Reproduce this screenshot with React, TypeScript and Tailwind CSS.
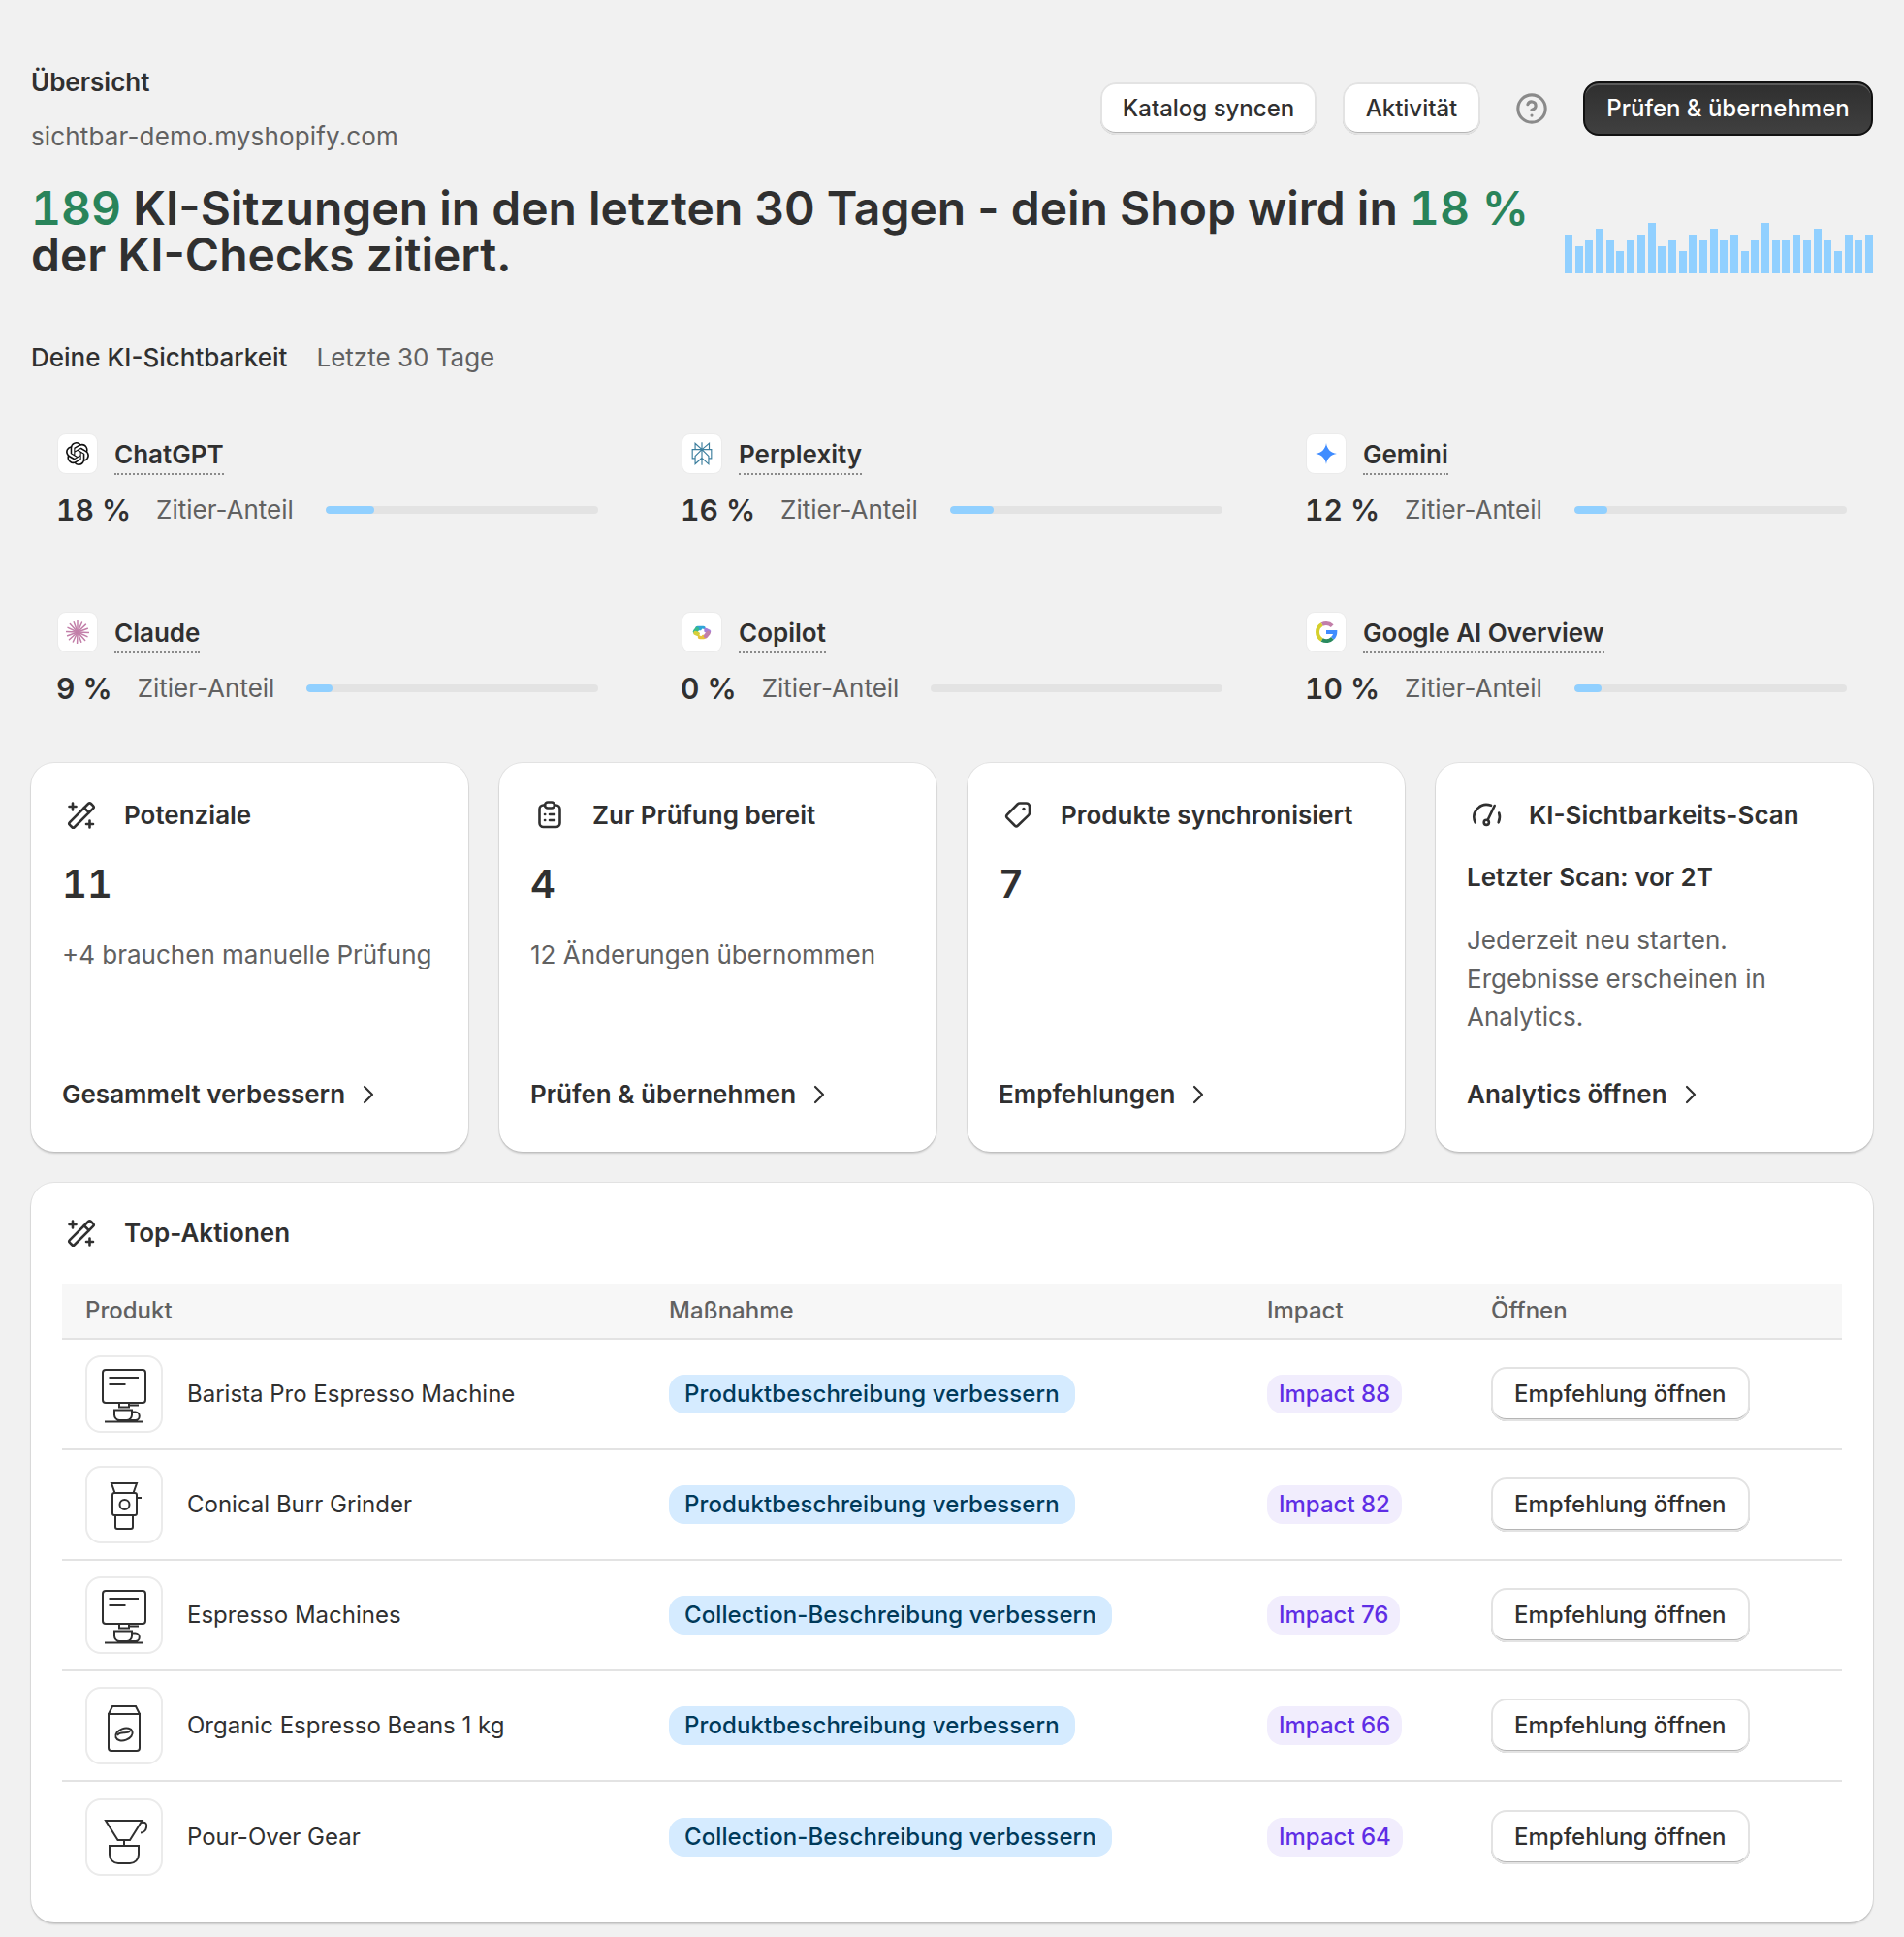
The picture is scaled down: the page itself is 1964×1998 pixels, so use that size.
import { ChevronRight, CircleHelp } from 'lucide-react';
import { SiOpenai, SiPerplexity } from 'react-icons/si';
import type { ReactNode } from 'react';

const sparkBars = [40, 28, 34, 46, 34, 23, 34, 40, 52, 28, 34, 23, 40, 34, 46, 34, 40, 23, 34, 52, 34, 34, 40, 34, 46, 34, 23, 40, 34, 40];

function WandIcon() {
  return (
    <svg viewBox="0 0 40 40" className="h-10 w-10 shrink-0" fill="none" stroke="#303030" strokeWidth="2.6" strokeLinecap="round">
      <g transform="rotate(-45 20 20)">
        <rect x="4.500" y="16.500" width="31" height="7" rx="2" />
        <path d="M27.500 16.500v7" />
      </g>
      <path d="M11 7.500v7M7.500 11h7M28.500 25.500v7M25 29h7" />
    </svg>
  );
}

function ClipboardIcon() {
  return (
    <svg viewBox="0 0 40 40" className="h-10 w-10 shrink-0" fill="none" stroke="#303030" strokeWidth="2.6" strokeLinecap="round">
      <path d="M15 9.500h-1.500a4 4 0 0 0-4 4V28a4 4 0 0 0 4 4h13a4 4 0 0 0 4-4V13.500a4 4 0 0 0-4-4H25" />
      <rect x="15" y="6.500" width="10" height="6" rx="3" />
      <path d="M15 19h.2M20 19h5M15 25h.2M20 25h5" />
    </svg>
  );
}

function TagIcon() {
  return (
    <svg viewBox="0 0 40 40" className="h-10 w-10 shrink-0" fill="none" stroke="#303030" strokeWidth="2.6" strokeLinejoin="round">
      <path d="M22 7.500h6.500a3.500 3.500 0 0 1 3.500 3.500v6.500a3.500 3.500 0 0 1-1 2.400L20 30.500a2.400 2.400 0 0 1-3.300 0l-7.800-7.800a2.400 2.400 0 0 1 0-3.300L19.600 8.500a3.400 3.400 0 0 1 2.400-1Z" />
      <circle cx="26" cy="13.500" r="1.700" fill="#303030" stroke="none" />
    </svg>
  );
}

function GaugeIcon() {
  return (
    <svg viewBox="0 0 40 40" className="h-10 w-10 shrink-0" fill="none" stroke="#303030" strokeWidth="2.6" strokeLinecap="round">
      <path d="M8.700 27.500A13 13 0 0 1 25 9.800" />
      <path d="M33.200 17.500A13 13 0 0 1 32.700 27.300" />
      <path d="M21.500 25l7.200-15" />
      <circle cx="20.300" cy="27.300" r="2.600" />
    </svg>
  );
}

function ClaudeIcon() {
  const rays = [0, 24, 47, 70, 92, 115, 138, 160, 182, 205, 228, 250, 272, 295, 318, 340];
  return (
    <svg viewBox="0 0 24 24" className="h-6 w-6" stroke="#c27fa9" strokeWidth="1.5" strokeLinecap="round">
      {rays.map((r, i) => (
        <line key={r} x1="12" y1="12" x2="12" y2={i % 2 ? 1 : 0.5} transform={`rotate(${r} 12 12)`} />
      ))}
    </svg>
  );
}

function GeminiIcon() {
  return (
    <svg viewBox="0 0 24 24" className="h-6 w-6">
      <path d="M12 1c.7 6 4.500 10 11 11-6.500 1-10.300 5-11 11-.7-6-4.500-10-11-11 6.500-1 10.300-5 11-11Z" fill="#3f8cff" />
    </svg>
  );
}

function CopilotIcon() {
  return (
    <svg viewBox="0 0 24 24" className="h-6 w-6" fill="none" strokeWidth="4.500" strokeLinecap="round">
      <path d="M7.500 8h6" stroke="#2fa5d8" />
      <path d="M5 11.500l2-2.500" stroke="#38b98e" />
      <path d="M5.500 13l2.500 1" stroke="#d6cf3a" />
      <path d="M10 17h4" stroke="#e8c23a" />
      <path d="M16 10l3 1.500" stroke="#a77fd6" />
      <path d="M18.500 13l-2.500 3" stroke="#c27fa9" />
      <path d="M13 10l-2 4.500" stroke="#fff" strokeWidth="3" />
    </svg>
  );
}

function GoogleIcon() {
  return (
    <svg viewBox="0 0 24 24" className="h-6 w-6" fill="none" strokeWidth="4">
      <path d="M18.200 5.600A9 9 0 0 0 12 3c-1.600 0-3 .4-4.300 1.100" stroke="#c27fa9" />
      <path d="M7.700 4.100A9 9 0 0 0 7.700 19.900" stroke="#d5cf2c" />
      <path d="M7.700 19.900A9 9 0 0 0 18.500 18.300" stroke="#2a8a5f" />
      <path d="M18.500 18.300c1.700-1.500 2.800-3.700 2.800-6.300H12" stroke="#3f8cff" />
    </svg>
  );
}

function MachineIcon() {
  return (
    <svg viewBox="0 0 80 80" className="h-20 w-20 shrink-0" fill="none" stroke="#303030" strokeWidth="2">
      <rect x="18" y="15" width="44" height="34" rx="3" />
      <path d="M24.500 23h30.500M24.500 30h17M35 49v4.500h10V49M45 51.500h10M30 56.500h18v5a5.500 5.500 0 0 1-5.500 5.500h-7a5.500 5.500 0 0 1-5.500-5.500ZM48 58.500h3.500a4 4 0 0 1 0 8.500H45M20 68.500h40" />
    </svg>
  );
}

function GrinderIcon() {
  return (
    <svg viewBox="0 0 80 80" className="h-20 w-20 shrink-0" fill="none" stroke="#303030" strokeWidth="2">
      <path d="M27 18h26l-3.500 10h-19ZM53 33h5" />
      <rect x="28" y="28" width="25" height="23" rx="2" />
      <circle cx="40.500" cy="40" r="5" />
      <path d="M31 51v12a2 2 0 0 0 2 2h14a2 2 0 0 0 2-2V51" />
    </svg>
  );
}

function BagIcon() {
  return (
    <svg viewBox="0 0 80 80" className="h-20 w-20 shrink-0" fill="none" stroke="#303030" strokeWidth="2">
      <path d="M24 28l4-8h24l4 8M24 28h32v35a3 3 0 0 1-3 3H27a3 3 0 0 1-3-3Z" />
      <ellipse cx="40" cy="49" rx="9" ry="6" transform="rotate(-20 40 49)" />
      <path d="M33 50c3-5 9-1 13-4" />
    </svg>
  );
}

function DripperIcon() {
  return (
    <svg viewBox="0 0 80 80" className="h-20 w-20 shrink-0" fill="none" stroke="#303030" strokeWidth="2">
      <path d="M21 23h37.500L46 43H33.500ZM40 43v6M58 25c4-1 6 1 5 5-.5 3-3 5.500-6 5.500M25 49h30v9a9 9 0 0 1-9 9H34a9 9 0 0 1-9-9Z" />
    </svg>
  );
}

function ProviderStat({ name, value, icon }: { name: string; value: number; icon: ReactNode }) {
  return (
    <div>
      <div className="flex items-start gap-[18px]">
        <div className="flex h-10 w-10 items-center justify-center rounded-lg bg-white shadow-[0_0_0_1px_#ebebeb]">{icon}</div>
        <span className="inline-block h-[42px] border-b-2 border-dotted border-[#8a8a8a] text-[26px] leading-[42px] font-semibold">{name}</span>
      </div>
      <div className="mt-[18px] -ml-0.5 flex items-center gap-[26px]">
        <span className="text-[30px] leading-9 font-semibold tabular-nums">{value} %</span>
        <span className="text-[26px] leading-9 text-[#616161]">Zitier-Anteil</span>
        <div className="ml-[7px] h-2 flex-1 overflow-hidden rounded-full bg-[#e3e3e3]">
          <div className="h-full rounded-full bg-[#91d0ff]" style={{ width: `${value}%` }} />
        </div>
      </div>
    </div>
  );
}

function StatCard({ icon, title, children, link }: { icon: ReactNode; title: string; children: ReactNode; link: string }) {
  return (
    <div className="flex h-[401px] flex-col rounded-3xl bg-white px-8 pt-[34px] pb-[42px] shadow-[0_0_0_1px_rgba(0,0,0,0.06),0_2px_2px_rgba(0,0,0,0.16)]">
      <div className="flex h-10 items-center gap-6">
        {icon}
        <h3 className="text-[26px] leading-[34px] font-semibold">{title}</h3>
      </div>
      {children}
      <a className="mt-auto flex items-center gap-2 text-[26px] leading-[34px] font-semibold">
        {link}
        <ChevronRight className="h-8 w-8" strokeWidth={1.6} />
      </a>
    </div>
  );
}

function Metric({ value, sub }: { value: string; sub: string }) {
  return (
    <>
      <div className="mt-[27px] text-[40px] leading-[48px] font-semibold tabular-nums">{value}</div>
      {sub && <p className="mt-[29px] text-[26px] leading-10 whitespace-nowrap text-[#616161]">{sub}</p>}
    </>
  );
}

function ActionRow({ name, icon, action, impact, last }: { name: string; icon: ReactNode; action: string; impact: number; last?: boolean }) {
  return (
    <div className={`grid h-[114px] grid-cols-[602px_617px_231px_386px] items-center ${last ? '' : 'border-b-2 border-[#e3e3e3]'}`}>
      <div className="flex items-center gap-[25px] pl-6">
        <div className="flex h-20 w-20 items-center justify-center rounded-2xl border-2 border-[#ebebeb]">{icon}</div>
        <span className="text-2xl">{name}</span>
      </div>
      <div className="pl-6">
        <span className="inline-block h-10 rounded-2xl bg-[#d5ebff] px-4 text-2xl leading-10 font-[550] tracking-[0.1px] text-[#003a5a]">{action}</span>
      </div>
      <div className="pl-6">
        <span className="inline-block h-10 rounded-2xl bg-[#f1edfd] px-3 text-2xl leading-10 font-[550] text-[#5f2ee5]">Impact {impact}</span>
      </div>
      <div className="pl-6">
        <button className="h-14 rounded-2xl bg-white px-6 text-2xl font-[550] shadow-[inset_0_0_0_2px_#e3e3e3,inset_0_-3px_0_#b5b5b5]">Empfehlung öffnen</button>
      </div>
    </div>
  );
}

export default function App() {
  return (
    <div className="min-h-[1998px] bg-[#f1f1f1] px-8 pt-[68px] text-[#303030] [font-family:Inter,sans-serif]">
      {/* Kopfzeile */}
      <header className="flex items-start justify-between">
        <div>
          <h1 className="text-[26px] leading-[34px] font-semibold">Übersicht</h1>
          <p className="mt-[22px] text-[26px] leading-[34px] tracking-[0.15px] text-[#616161]">sichtbar-demo.myshopify.com</p>
        </div>
        <div className="mt-4 flex items-center">
          <button className="h-[54px] w-[223px] rounded-2xl bg-white text-2xl font-[550] shadow-[inset_0_0_0_2px_#e3e3e3,inset_0_-3px_0_#b5b5b5]">Katalog syncen</button>
          <button className="ml-[27px] h-[54px] w-[142px] rounded-2xl bg-white text-2xl font-[550] shadow-[inset_0_0_0_2px_#e3e3e3,inset_0_-3px_0_#b5b5b5]">Aktivität</button>
          <CircleHelp className="mx-9 h-[34px] w-[34px] text-[#8a8a8a]" strokeWidth={2.2} />
          <button className="h-14 w-[299px] rounded-2xl border-2 border-[#111] bg-gradient-to-b from-[#2f2f2f] to-[#404040] text-2xl font-[550] text-white shadow-[inset_0_2px_0_#5a5a5a]">Prüfen &amp; übernehmen</button>
        </div>
      </header>

      {/* Headline + Sparkline */}
      <div className="mt-[33px] flex items-start justify-between">
        <h2 className="w-[1570px] text-[48px] leading-[48px] font-semibold">
          <span className="text-[#29845a] tabular-nums">189</span> KI-Sitzungen in den letzten 30 Tagen - dein Shop wird in <span className="text-[#29845a] tabular-nums">18 %</span> der KI-Checks zitiert.
        </h2>
        <div className="mt-[39px] flex h-[52px] w-[318px] items-end justify-between">
          {sparkBars.map((h, i) => (
            <div key={i} className="w-2 bg-[#91d0ff]" style={{ height: h }} />
          ))}
        </div>
      </div>

      {/* KI-Sichtbarkeit */}
      <div className="mt-[65px] flex gap-[30px] text-[26px] leading-[34px]">
        <span className="font-medium">Deine KI-Sichtbarkeit</span>
        <span className="text-[#616161]">Letzte 30 Tage</span>
      </div>
      <div className="mt-[62px] grid grid-cols-3 gap-x-[87px] gap-y-[88px] pr-[27px] pl-7">
        <ProviderStat name="ChatGPT" value={18} icon={<SiOpenai className="h-6 w-6 text-[#111]" />} />
        <ProviderStat name="Perplexity" value={16} icon={<SiPerplexity className="h-6 w-6 text-[#3d7f9e]" />} />
        <ProviderStat name="Gemini" value={12} icon={<GeminiIcon />} />
        <ProviderStat name="Claude" value={9} icon={<ClaudeIcon />} />
        <ProviderStat name="Copilot" value={0} icon={<CopilotIcon />} />
        <ProviderStat name="Google AI Overview" value={10} icon={<GoogleIcon />} />
      </div>

      {/* Karten */}
      <div className="mt-[59px] grid grid-cols-4 gap-8">
        <StatCard icon={<WandIcon />} title="Potenziale" link="Gesammelt verbessern">
          <Metric value="11" sub="+4 brauchen manuelle Prüfung" />
        </StatCard>
        <StatCard icon={<ClipboardIcon />} title="Zur Prüfung bereit" link="Prüfen & übernehmen">
          <Metric value="4" sub="12 Änderungen übernommen" />
        </StatCard>
        <StatCard icon={<TagIcon />} title="Produkte synchronisiert" link="Empfehlungen">
          <Metric value="7" sub="" />
        </StatCard>
        <StatCard icon={<GaugeIcon />} title="KI-Sichtbarkeits-Scan" link="Analytics öffnen">
          <p className="mt-[27px] text-[26px] leading-[34px] font-semibold">Letzter Scan: vor 2T</p>
          <p className="mt-7 text-[26px] leading-[39.5px] text-[#616161]">Jederzeit neu starten. Ergebnisse erscheinen in Analytics.</p>
        </StatCard>
      </div>

      {/* Top-Aktionen */}
      <section className="mt-8 rounded-3xl bg-white px-8 pt-8 pb-[31px] shadow-[0_0_0_1px_rgba(0,0,0,0.06),0_2px_2px_rgba(0,0,0,0.16)]">
        <div className="flex h-10 items-center gap-6">
          <WandIcon />
          <h3 className="text-[26px] leading-[34px] font-semibold">Top-Aktionen</h3>
        </div>
        <div className="mt-8">
          <div className="grid h-[58px] grid-cols-[602px_617px_231px_386px] items-center border-b-2 border-[#e3e3e3] bg-[#f7f7f7] text-2xl font-medium text-[#616161]">
            <span className="pl-6">Produkt</span>
            <span className="pl-6">Maßnahme</span>
            <span className="pl-6">Impact</span>
            <span className="pl-6">Öffnen</span>
          </div>
          <ActionRow name="Barista Pro Espresso Machine" icon={<MachineIcon />} action="Produktbeschreibung verbessern" impact={88} />
          <ActionRow name="Conical Burr Grinder" icon={<GrinderIcon />} action="Produktbeschreibung verbessern" impact={82} />
          <ActionRow name="Espresso Machines" icon={<MachineIcon />} action="Collection-Beschreibung verbessern" impact={76} />
          <ActionRow name="Organic Espresso Beans 1 kg" icon={<BagIcon />} action="Produktbeschreibung verbessern" impact={66} />
          <ActionRow name="Pour-Over Gear" icon={<DripperIcon />} action="Collection-Beschreibung verbessern" impact={64} last />
        </div>
      </section>
    </div>
  );
}
